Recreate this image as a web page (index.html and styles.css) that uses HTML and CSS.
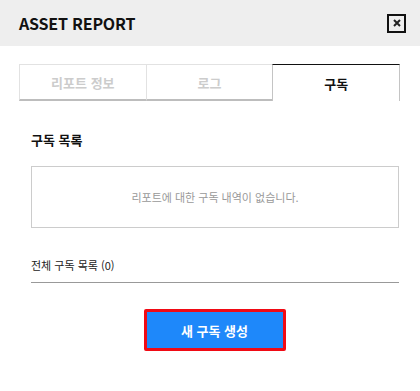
FILE: index.html
```html
<!DOCTYPE html>
<html lang="ko">
<head>
  <meta charset="UTF-8">
  <title>ASSET REPORT</title>
  <link rel="stylesheet" href="styles.css">
</head>
<body>
  <div class="dialog">
    <div class="dialog-header">
      <h1>ASSET REPORT</h1>
      <button class="close-btn" aria-label="close">
        <svg width="8" height="8" viewBox="0 0 8 8"><path d="M1 1L7 7M7 1L1 7" stroke="#222" stroke-width="2"/></svg>
      </button>
    </div>
    <div class="dialog-body">
      <div class="tabs">
        <div class="tab">리포트 정보</div>
        <div class="tab">로그</div>
        <div class="tab active">구독</div>
      </div>
      <div class="section">
        <h2>구독 목록</h2>
        <div class="empty-box">리포트에 대한 구독 내역이 없습니다.</div>
        <div class="total">전체 구독 목록 (0)</div>
        <div class="actions">
          <button class="primary-btn">새 구독 생성</button>
        </div>
      </div>
    </div>
  </div>
</body>
</html>
```
FILE: styles.css
```css
body {
  margin: 0;
  font-family: "Noto Sans CJK KR", "Noto Sans", sans-serif;
  background: #fff;
  color: #111;
}

.dialog {
  width: 420px;
  height: 391px;
  background: #fff;
}

.dialog-header {
  height: 46px;
  background: #eeeeee;
  display: flex;
  align-items: center;
  justify-content: space-between;
  padding: 0 14px 0 19px;
  box-sizing: border-box;
}

.dialog-header h1 {
  margin: 0;
  font-size: 16px;
  font-weight: bold;
  color: #111;
  letter-spacing: -0.2px;
}

.close-btn {
  width: 19px;
  height: 19px;
  border: 2px solid #111;
  background: #eee;
  padding: 0;
  display: flex;
  align-items: center;
  justify-content: center;
  box-sizing: border-box;
}

.dialog-body {
  padding: 18px 20px 0 19px;
}

.tabs {
  display: flex;
  height: 37px;
}

.tab {
  flex: 1;
  display: flex;
  align-items: center;
  justify-content: center;
  border: 1px solid #e2e2e2;
  border-bottom: 2px solid #bdbdbd;
  border-right: none;
  color: #cccccc;
  font-size: 13px;
  font-weight: bold;
  box-sizing: border-box;
}

.tab.active {
  border: 1px solid #c4c4c4;
  border-top: 1px solid #111;
  border-bottom: none;
  color: #111;
}

.section {
  padding: 29px 1px 0 12px;
}

.section h2 {
  margin: 0 0 16px;
  font-size: 13px;
  font-weight: bold;
  color: #111;
  line-height: 20px;
}

.empty-box {
  height: 62px;
  border: 1px solid #cccccc;
  display: flex;
  align-items: center;
  justify-content: center;
  font-size: 11px;
  color: #999;
  box-sizing: border-box;
}

.total {
  margin-top: 27px;
  padding-bottom: 7px;
  border-bottom: 1px solid #999;
  font-size: 11px;
  color: #222;
  line-height: 20px;
}

.actions {
  display: flex;
  justify-content: center;
  padding-top: 26px;
  padding-right: 1px;
}

.primary-btn {
  width: 142px;
  height: 42px;
  border: 3px solid #f00a14;
  border-radius: 2px;
  background: #1e88fa;
  color: #fff;
  font-family: "Noto Sans CJK KR", "Noto Sans", sans-serif;
  font-size: 13px;
  font-weight: bold;
}
```
